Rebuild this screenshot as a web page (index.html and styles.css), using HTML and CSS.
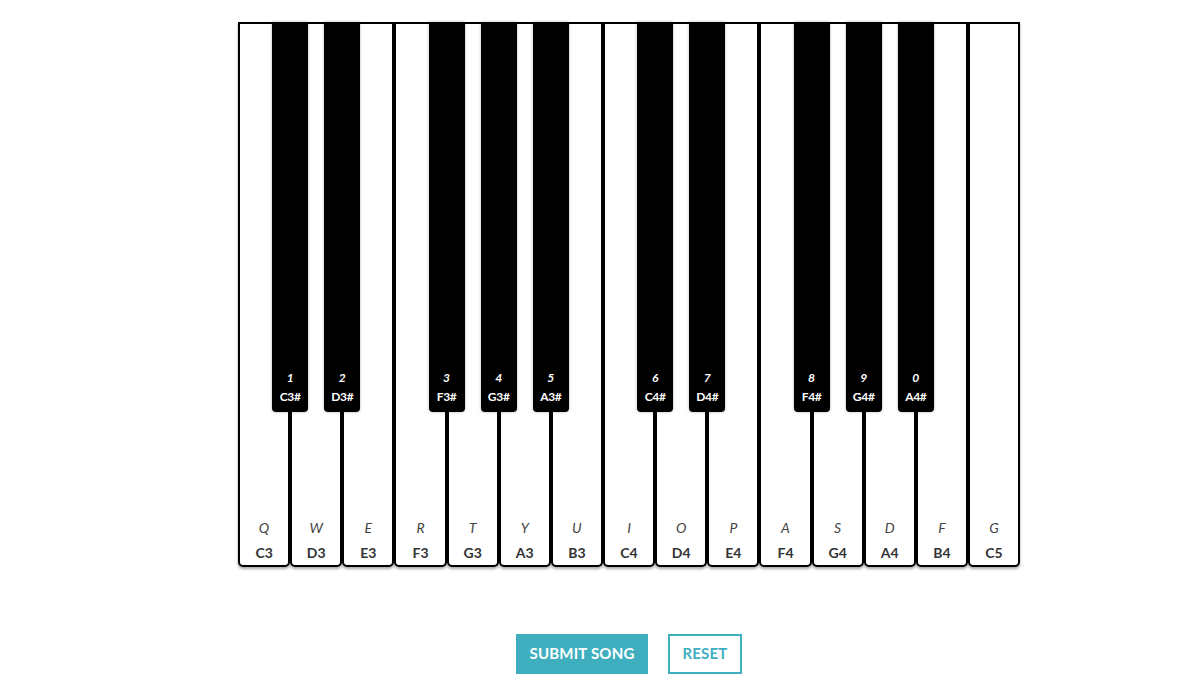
FILE: index.html
```html
<!DOCTYPE html>
<html>
<head>
<meta charset="utf-8">
<link rel="stylesheet" href="styles.css">
</head>
<body>
<main class="page">
  <div class="keyboard">
    <div class="white"><div class="black"><span class="bk-key">1</span><span class="bk-note">C3#</span></div><span class="wk-key">Q</span><span class="wk-note">C3</span></div>
    <div class="white"><div class="black"><span class="bk-key">2</span><span class="bk-note">D3#</span></div><span class="wk-key">W</span><span class="wk-note">D3</span></div>
    <div class="white"><span class="wk-key">E</span><span class="wk-note">E3</span></div>
    <div class="white"><div class="black"><span class="bk-key">3</span><span class="bk-note">F3#</span></div><span class="wk-key">R</span><span class="wk-note">F3</span></div>
    <div class="white"><div class="black"><span class="bk-key">4</span><span class="bk-note">G3#</span></div><span class="wk-key">T</span><span class="wk-note">G3</span></div>
    <div class="white"><div class="black"><span class="bk-key">5</span><span class="bk-note">A3#</span></div><span class="wk-key">Y</span><span class="wk-note">A3</span></div>
    <div class="white"><span class="wk-key">U</span><span class="wk-note">B3</span></div>
    <div class="white"><div class="black"><span class="bk-key">6</span><span class="bk-note">C4#</span></div><span class="wk-key">I</span><span class="wk-note">C4</span></div>
    <div class="white"><div class="black"><span class="bk-key">7</span><span class="bk-note">D4#</span></div><span class="wk-key">O</span><span class="wk-note">D4</span></div>
    <div class="white"><span class="wk-key">P</span><span class="wk-note">E4</span></div>
    <div class="white"><div class="black"><span class="bk-key">8</span><span class="bk-note">F4#</span></div><span class="wk-key">A</span><span class="wk-note">F4</span></div>
    <div class="white"><div class="black"><span class="bk-key">9</span><span class="bk-note">G4#</span></div><span class="wk-key">S</span><span class="wk-note">G4</span></div>
    <div class="white"><div class="black"><span class="bk-key">0</span><span class="bk-note">A4#</span></div><span class="wk-key">D</span><span class="wk-note">A4</span></div>
    <div class="white"><span class="wk-key">F</span><span class="wk-note">B4</span></div>
    <div class="white"><span class="wk-key">G</span><span class="wk-note">C5</span></div>
  </div>
  <div class="actions">
    <button class="btn btn-primary">Submit Song</button>
    <button class="btn btn-outline">Reset</button>
  </div>
</main>
</body>
</html>
```

FILE: styles.css
```css
html, body {
  margin: 0;
  padding: 0;
  background: #fff;
}

body {
  font-family: "Lato", "Open Sans", "Liberation Sans", sans-serif;
  color: #333;
}

.page {
  padding-left: 56px;
  padding-top: 22px;
  display: flex;
  flex-direction: column;
  align-items: center;
}

.keyboard {
  display: flex;
  width: 782px;
}

.white {
  position: relative;
  flex: 1 1 0;
  box-sizing: border-box;
  height: 545px;
  border: 2px solid #000;
  border-radius: 0 0 5px 5px;
  background: #fff;
  box-shadow: 0 2px 3px rgba(0, 0, 0, 0.35);
  display: flex;
  flex-direction: column;
  align-items: center;
  justify-content: flex-end;
  padding-bottom: 2px;
}

.wk-key {
  font-style: italic;
  font-size: 14px;
  line-height: 20px;
  color: #444;
  margin-bottom: 5px;
}

.wk-note {
  font-weight: 700;
  font-size: 14px;
  line-height: 20px;
  color: #333;
}

.black {
  position: absolute;
  top: -2px;
  right: -20px;
  width: 36px;
  height: 390px;
  background: #000;
  border-radius: 0 0 4px 4px;
  z-index: 2;
  box-shadow: 0 0 3px rgba(0, 0, 0, 0.3);
  display: flex;
  flex-direction: column;
  align-items: center;
  justify-content: flex-end;
  padding-bottom: 8px;
  box-sizing: border-box;
  color: #fff;
}

.bk-key {
  font-style: italic;
  font-weight: 700;
  font-size: 12px;
  line-height: 14px;
  margin-bottom: 5px;
}

.bk-note {
  font-weight: 700;
  font-size: 12px;
  line-height: 14px;
  letter-spacing: -0.3px;
}

.actions {
  display: flex;
  gap: 20px;
  margin-top: 67px;
}

.btn {
  box-sizing: border-box;
  height: 40px;
  font-family: inherit;
  font-size: 15px;
  font-weight: 700;
  text-transform: uppercase;
  letter-spacing: 0.2px;
  border: 2px solid #3fafc0;
  border-radius: 0;
  cursor: pointer;
  padding: 0 0 3px 0;
}

.btn-primary {
  width: 132px;
  background: #3fafc0;
  color: #fff;
}

.btn-outline {
  width: 74px;
  background: #fff;
  color: #3fafc0;
}
```
